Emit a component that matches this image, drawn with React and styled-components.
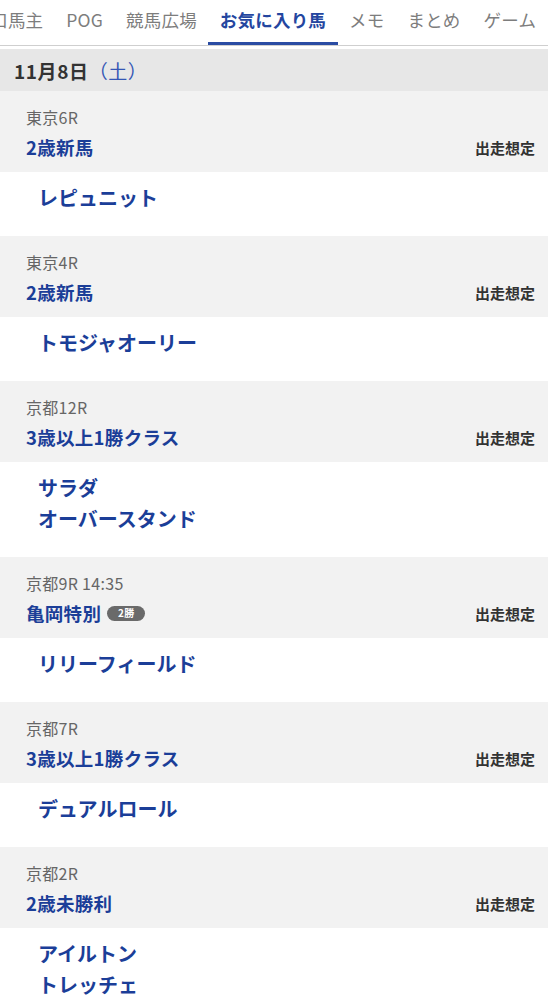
import React, { useLayoutEffect, useRef } from "react";
import styled, { createGlobalStyle } from "styled-components";

const GlobalStyle = createGlobalStyle`
  html, body { margin: 0; padding: 0; background: #fff; }
  body {
    font-family: "Noto Sans CJK JP", "Noto Sans", "Liberation Sans", sans-serif;
    -webkit-font-smoothing: antialiased;
  }
  * { box-sizing: border-box; }
`;

const TabBar = styled.nav`
  display: flex;
  height: 46px;
  border-bottom: 1px solid #cfcfcf;
  overflow-x: auto;
  white-space: nowrap;
  scrollbar-width: none;
  &::-webkit-scrollbar { display: none; }
`;

const Tab = styled.div`
  flex: 0 0 auto;
  display: flex;
  align-items: center;
  height: 45px;
  padding: 3px 11.5px 5px;
  font-size: 17.5px;
  line-height: 1;
  letter-spacing: 0.2px;
  color: ${(p) => (p.$active ? "#24469f" : "#7d7d7d")};
  font-weight: ${(p) => (p.$active ? 700 : 400)};
  border-bottom: 3px solid ${(p) => (p.$active ? "#2a4ca3" : "transparent")};
`;

const DateBar = styled.div`
  margin-top: 3px;
  height: 42px;
  display: flex;
  align-items: center;
  padding-left: 14px;
  background: #e7e7e7;
  font-size: 19px;
  font-weight: 700;
  letter-spacing: 0.6px;
  color: #333;
`;

const Weekday = styled.span`
  color: #3557b5;
  font-weight: 400;
`;

const RaceHeader = styled.div`
  background: #f2f2f2;
  padding: 16px 13px 11px 26px;
`;

const Venue = styled.div`
  font-size: 16px;
  line-height: 20px;
  letter-spacing: 0.3px;
  color: #666;
`;

const NameRow = styled.div`
  margin-top: 6px;
  height: 28px;
  display: flex;
  align-items: center;
  justify-content: space-between;
`;

const RaceName = styled.div`
  display: flex;
  align-items: center;
  font-size: 18.5px;
  font-weight: 700;
  letter-spacing: 0.3px;
  color: #1b3e98;
`;

const Badge = styled.span`
  display: inline-flex;
  align-items: center;
  justify-content: center;
  margin-left: 6px;
  width: 38px;
  height: 15px;
  border-radius: 8px;
  background: #6a6a6a;
  color: #fff;
  font-size: 10px;
  font-weight: 700;
  line-height: 1;
`;

const Status = styled.div`
  font-size: 15px;
  font-weight: 700;
  color: #333;
`;

const HorseList = styled.div`
  background: #fff;
  padding: 10px 0 23px 38px;
`;

const Horse = styled.div`
  font-size: 20px;
  line-height: 31px;
  font-weight: 700;
  color: #1b3e98;
`;

const tabs = ["一口馬主", "POG", "競馬広場", "お気に入り馬", "メモ", "まとめ", "ゲーム"];

const races = [
  { venue: "東京6R", name: "2歳新馬", horses: ["レピュニット"] },
  { venue: "東京4R", name: "2歳新馬", horses: ["トモジャオーリー"] },
  { venue: "京都12R", name: "3歳以上1勝クラス", horses: ["サラダ", "オーバースタンド"] },
  { venue: "京都9R 14:35", name: "亀岡特別", badge: "2勝", horses: ["リリーフィールド"] },
  { venue: "京都7R", name: "3歳以上1勝クラス", horses: ["デュアルロール"] },
  { venue: "京都2R", name: "2歳未勝利", horses: ["アイルトン", "トレッチェ"] },
];

export default function App() {
  const barRef = useRef(null);
  const firstRef = useRef(null);

  useLayoutEffect(() => {
    const bar = barRef.current;
    const first = firstRef.current;
    if (bar && first) {
      // the strip is scrolled so the first tab's text ends at ~44px
      bar.scrollLeft = Math.max(0, first.offsetWidth - 11.5 - 44);
    }
  }, []);

  return (
    <>
      <GlobalStyle />
      <TabBar ref={barRef}>
        {tabs.map((t, i) => (
          <Tab key={t} ref={i === 0 ? firstRef : undefined} $active={t === "お気に入り馬"}>
            {t}
          </Tab>
        ))}
      </TabBar>
      <DateBar>
        11月8日<Weekday>（土）</Weekday>
      </DateBar>
      {races.map((r, i) => (
        <section key={i}>
          <RaceHeader>
            <Venue>{r.venue}</Venue>
            <NameRow>
              <RaceName>
                {r.name}
                {r.badge && <Badge>{r.badge}</Badge>}
              </RaceName>
              <Status>出走想定</Status>
            </NameRow>
          </RaceHeader>
          <HorseList>
            {r.horses.map((h) => (
              <Horse key={h}>{h}</Horse>
            ))}
          </HorseList>
        </section>
      ))}
    </>
  );
}
